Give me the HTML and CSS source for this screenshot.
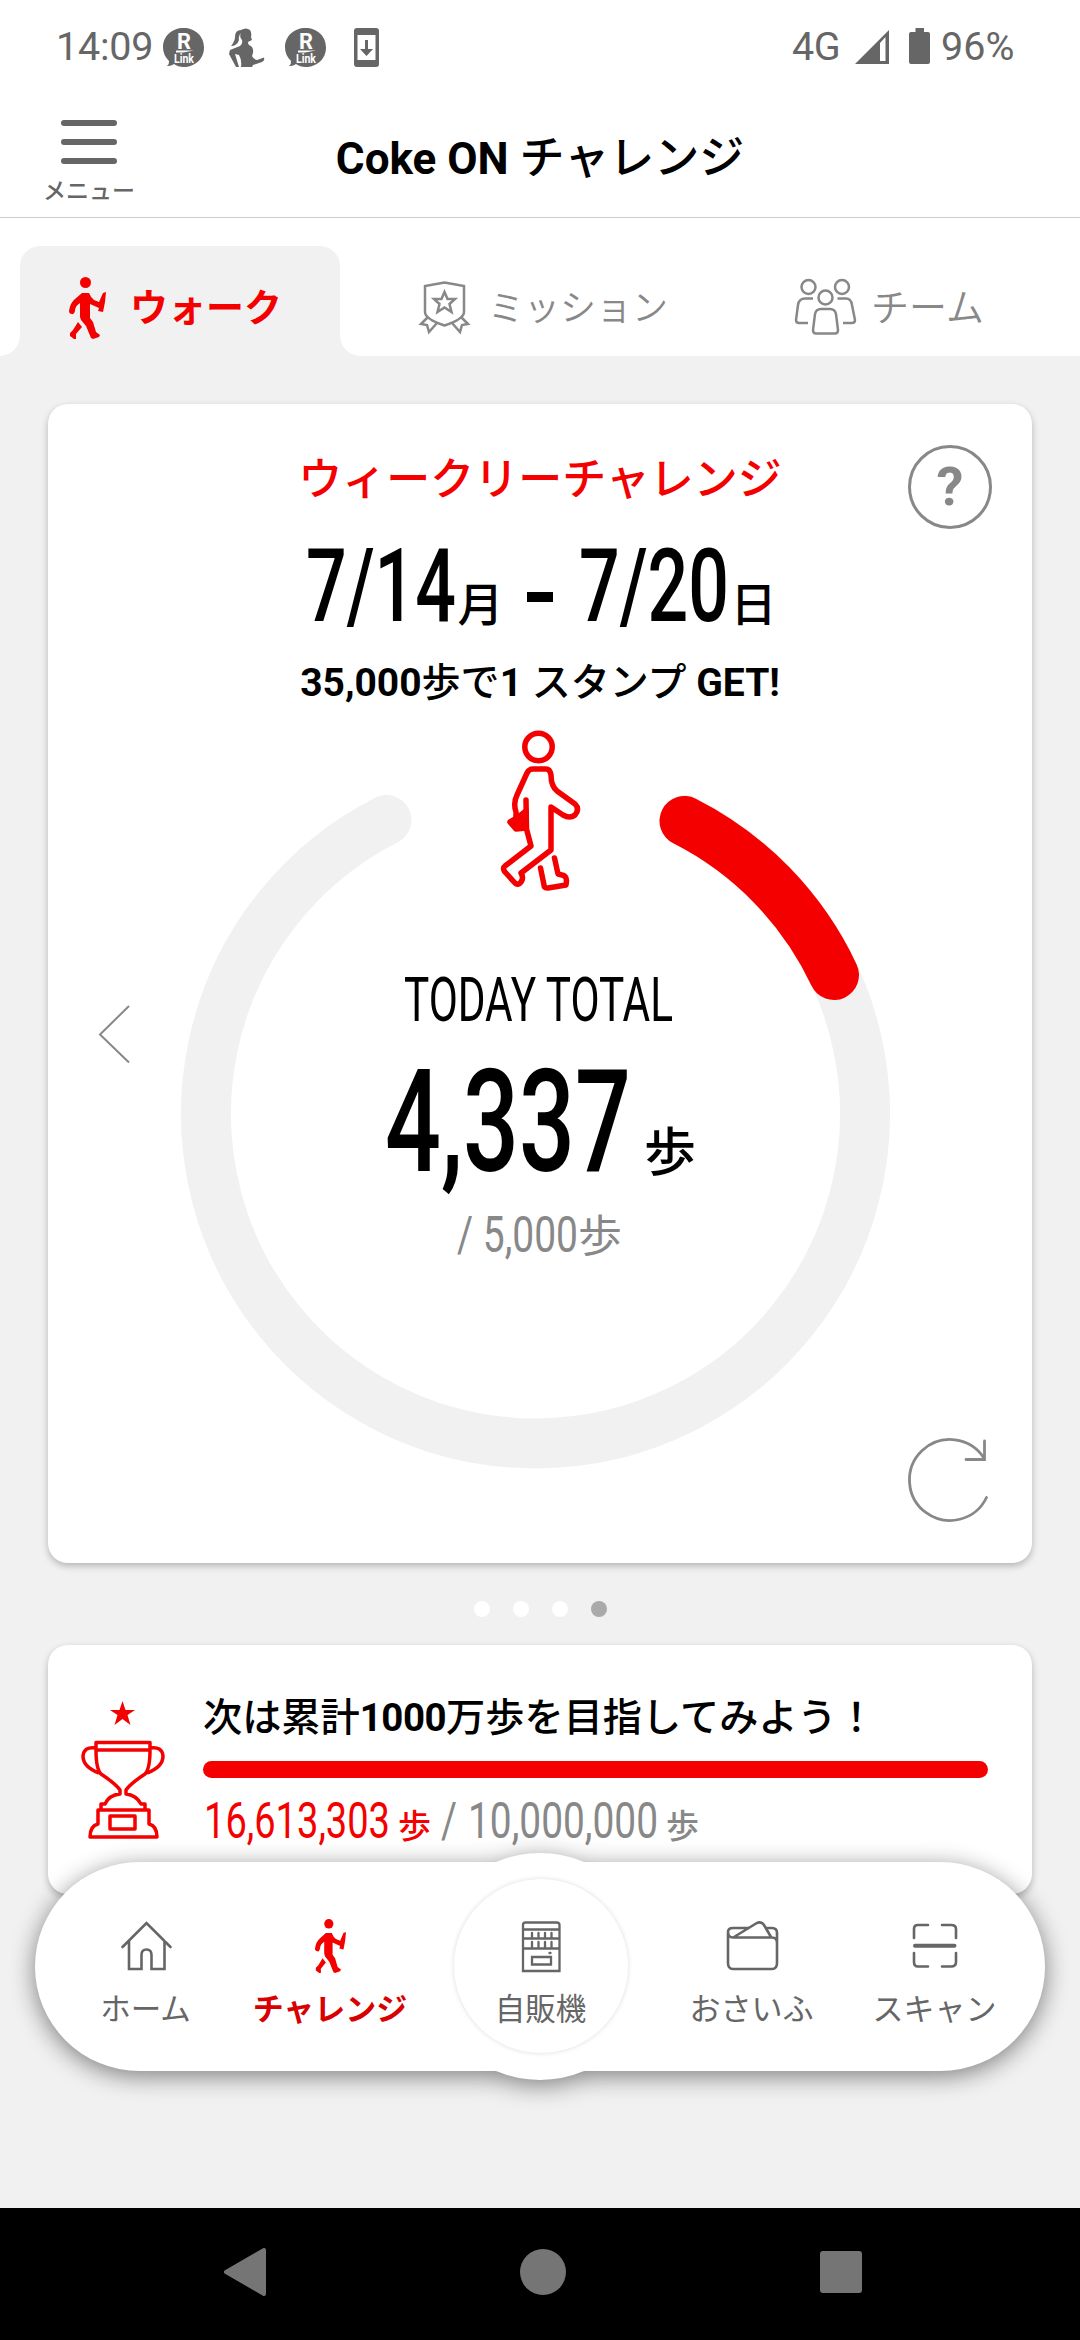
FILE: index.html
```html
<!DOCTYPE html>
<html lang="ja">
<head>
<meta charset="utf-8">
<title>Coke ON チャレンジ</title>
<link rel="stylesheet" href="styles.css">
</head>
<body>
<svg class="defs" aria-hidden="true">
  <symbol id="walker" viewBox="0 0 37 62">
    <circle cx="16.500" cy="5.500" r="5.500"/>
    <path d="M13 16H20Q22 21 25 23L30 25 34 16 37 15 36 25 34 35 29 34 30 31 21 27V41L24 45 27 55 31 58 30 60 24 62 22 61 17 49 12 43 11 40V26Q6 29 6 34 5 38 3 37 0 37 0 34 1 26 6 22Z"/>
    <path d="M9 45L13 50 7 57V62L5 62 1 59 1 56 4 53Z"/>
  </symbol>
  <symbol id="rlink" viewBox="0 0 41 39">
    <path class="fill" d="M20.500 0C32 0 41 8 41 19.500S32 39 20.500 39Q15 39 11 36Q8 38.500 4 38Q6.500 36 6 33Q0 27 0 19.500C0 8 9 0 20.500 0Z"/>
    <path d="M13 22.500H31L20 24.500H13Z" fill="#fff"/>
    <text class="rlink-r" x="14" y="20.500" textLength="14" lengthAdjust="spacingAndGlyphs">R</text>
    <text class="rlink-link" x="11" y="34.500" textLength="20" lengthAdjust="spacingAndGlyphs">Link</text>
  </symbol>
</svg>

<header class="status">
  <span class="time">14:09</span>
  <svg class="st-link" width="41" height="39"><use href="#rlink"/></svg>
  <svg class="st-runner" width="36" height="39" viewBox="0 0 36 39"><path class="fill" d="M12 2Q17-1 21 2 23 5 22 9L23 12 19 14Q19 16 20 17 25 19 24 25L23 28Q24 31 28 32L35 29.500Q36 33 33 34L24 37 23 39H12Q13 32 10 27L6 26 10 39H7L0 26 1 22 11 18Q14 16 13 12 10 9 12 5 9 8 10 12 8 18 2 18 6 13 6 9 6 2 12 2Z"/></svg>
  <svg class="st-link" width="41" height="39"><use href="#rlink"/></svg>
  <svg class="st-phone" width="25" height="39" viewBox="0 0 25 39"><path class="fill" fill-rule="evenodd" d="M3 0H22Q25 0 25 3V36Q25 39 22 39H3Q0 39 0 36V3Q0 0 3 0ZM3.500 7V32H21.500V7ZM11 12H14V21H19L12.500 28 6 21H11Z"/></svg>
  <span class="net">4G</span>
  <svg class="st-signal" width="34" height="34" viewBox="0 0 34 34"><path class="fill" fill-rule="evenodd" d="M34 0V34H0ZM25 13V31H30.500V7Z"/></svg>
  <svg class="st-battery" width="21" height="36" viewBox="0 0 21 36"><path class="fill" d="M6.500 0H15V4H19Q21 4 21 6V34Q21 36 19 36H2Q0 36 0 34V6Q0 4 2 4H6.500Z"/></svg>
  <span class="level">96%</span>
</header>

<div class="appbar">
  <button class="menu"><i></i><i></i><i></i><span>メニュー</span></button>
  <h1>Coke ON <span>チャレンジ</span></h1>
</div>

<nav class="tabs">
  <a class="tab active">
    <svg class="red" width="37" height="62"><use href="#walker"/></svg>
    <span>ウォーク</span>
  </a>
  <a class="tab mission">
    <svg class="line" width="51" height="52" viewBox="0 0 51 52"><path d="M25.500 1.500L45 5V31Q45 38 25.500 44.500 6 38 6 31V5ZM25.500 11L28.500 18H36L30.500 23 32.500 31 25.500 26.500 18.500 31 20.500 23 15 18H22.500ZM9 36L2 43 8 44 10 51 18 42M42 36L49 43 43 44 41 51 33 42"/></svg>
    <span>ミッション</span>
  </a>
  <a class="tab team">
    <svg class="line" width="61" height="56" viewBox="0 0 61 56"><circle cx="13.500" cy="8" r="7"/><circle cx="47" cy="8" r="7"/><circle cx="30.500" cy="18.500" r="7"/><path d="M18 19.500H10Q4 19.500 3 26L1 41Q1 44 4 44H13M42.500 19.500H51Q56 19.500 57 26L60 41Q60 44 57 44H48M26 30H35Q40 30 41 35L43 51Q43 54.500 40 54.500H21Q18 54.500 18 51L20 35Q21 30 26 30Z"/></svg>
    <span>チーム</span>
  </a>
</nav>

<main>
  <section class="card weekly">
    <h2>ウィークリーチャレンジ</h2>
    <div class="range">
      <svg width="150" height="80"><text class="date" x="0" y="76" textLength="150" lengthAdjust="spacingAndGlyphs">7/14</text></svg>
      <span class="day">月</span>
      <i class="dash"></i>
      <svg width="150" height="80"><text class="date" x="0" y="76" textLength="150" lengthAdjust="spacingAndGlyphs">7/20</text></svg>
      <span class="day">日</span>
    </div>
    <p class="reward">35,000<span>歩で</span>1 <span>スタンプ</span> GET!</p>

    <svg class="dial" width="984" height="760" viewBox="48 724 984 760">
      <path class="track" d="M386.500 820A329.500 329.500 0 1 0 684.500 820"/>
      <path class="value" d="M684.500 821A329.500 329.500 0 0 1 834 975"/>
      <g class="figure">
        <circle cx="538.500" cy="747" r="13.700"/>
        <path d="M526 800L526.500 829 531 846 505 866Q502 868 505 872L515 883Q518 886 521 882 524 878 521 873L551 850V807L563 815Q570 819 575 815 580 809 575 804L557 791Q551 786 551 775Q550 769 546 769H533Q529 769 527 773L517 795Q513 803 516 812V820"/>
        <path class="solid" d="M526 811L517 818 510 822 516 829 526 828Z"/>
        <path d="M540.500 868L544 885Q544 888 548 888L566 885Q568 876 562 875L558 874 554.500 858"/>
      </g>
      <path class="chevron" d="M129 1006L100 1034.500 129 1062.500"/>
      <text class="today" x="404" y="1021" textLength="269" lengthAdjust="spacingAndGlyphs">TODAY TOTAL</text>
      <text class="steps" x="385" y="1171" textLength="246" lengthAdjust="spacingAndGlyphs">4,337</text>
      <text class="steps-unit" x="644" y="1171">歩</text>
      <text class="goal" x="457" y="1252" textLength="121" lengthAdjust="spacingAndGlyphs">/ 5,000</text>
      <text class="goal-unit" x="578" y="1252">歩</text>
    </svg>

    <button class="help">?</button>
    <svg class="refresh" width="84" height="86" viewBox="908 1438 84 86"><path d="M986.500 1497.500A40.500 40.500 0 1 1 984 1458M984.500 1441V1459.500H966"/></svg>
  </section>

  <div class="pager"><i></i><i></i><i></i><i class="on"></i></div>

  <section class="card total">
    <svg class="cup" width="84" height="138" viewBox="81 1701 84 138">
      <path class="solid" d="M122.500 1701L125.500 1710H135L127.500 1715 130.500 1725 122.500 1719 114.500 1725 117.500 1715 110 1710H119.500Z"/>
      <path d="M96 1742.500H150V1750H96ZM96 1750Q96 1769 101 1774 116 1784 120 1790V1794Q109 1795 105 1804H101V1810H98V1824Q90 1826 90 1837H157Q157 1826 149 1824V1810H145V1804H141Q136 1795 126 1794V1790Q130 1784 145 1774 150 1769 150 1750M96 1748Q84 1746 83 1756 83 1767 99 1773M150 1748Q162 1746 163 1756 163 1767 147 1773M101 1810H145M110 1816H135V1829H110Z"/>
    </svg>
    <div class="total-body">
      <p class="next">次は累計<b>1000</b>万歩を目指してみよう！</p>
      <div class="bar"></div>
      <svg class="counts" width="520" height="50">
        <text class="count on" x="1" y="46" textLength="186" lengthAdjust="spacingAndGlyphs">16,613,303</text>
        <text class="unit on" x="195" y="46">歩</text>
        <text class="count" x="238" y="46" textLength="16" lengthAdjust="spacingAndGlyphs">/</text>
        <text class="count" x="265" y="46" textLength="190" lengthAdjust="spacingAndGlyphs">10,000,000</text>
        <text class="unit" x="463" y="46">歩</text>
      </svg>
    </div>
  </section>
</main>

<nav class="dock">
  <svg class="dock-shape" width="1080" height="300" viewBox="0 1820 1080 300"><path d="M139.500 1862H496A113 113 0 0 1 584 1862H940.500A104.500 104.500 0 0 1 940.500 2071H584A113 113 0 0 1 496 2071H139.500A104.500 104.500 0 0 1 139.500 1862Z"/></svg>
  <a class="item home"><svg width="50" height="54" viewBox="120 1919 50 54"><path d="M121.500 1947L145.500 1923 169.500 1947M128 1941V1969H140.500V1955Q140.500 1949.500 145.500 1949.500T150.500 1955V1969H163.500V1941"/></svg><span>ホーム</span></a>
  <a class="item on"><svg width="31" height="54" viewBox="0 0 37 62" preserveAspectRatio="none"><use href="#walker" width="37" height="62"/></svg><span>チャレンジ</span></a>
  <a class="item vending"><svg width="40" height="54" viewBox="520 1919 40 54"><path d="M524.500 1922.500H555.500Q558.500 1922.500 558.500 1925V1971H522V1925Q522 1922.500 524.500 1922.500ZM522 1929.500H558.500M522 1938.500H558.500M522 1948.500H558.500M531 1957H550V1964.500H531ZM531 1933V1938M537.500 1933V1938M544 1933V1938M550.500 1933V1938M531 1942V1948M537.500 1942V1948M544 1942V1948M550.500 1942V1948M548.500 1953H549.500"/></svg><span>自販機</span></a>
  <a class="item wallet"><svg width="54" height="54" viewBox="724 1919 54 54"><path d="M727 1933V1963Q727 1969 732 1969H771Q776 1969 776 1963V1943Q776 1937.500 771 1937.500H732Q727 1937.500 727 1932 727 1928 732 1928H747M765 1928H771Q776 1928 776 1933V1943M733 1937L755 1923.500Q760 1920.500 763 1925L770 1937"/></svg><span>おさいふ</span></a>
  <a class="item scan"><svg width="48" height="54" viewBox="911 1919 48 54"><path d="M914 1938V1929Q914 1925 918 1925H928M942 1925H951Q956 1925 956 1929V1938M914 1953V1962Q914 1966.500 918 1966.500H928M942 1966.500H951Q956 1966.500 956 1962V1953"/><path class="beam" d="M915 1945.700H954.500"/></svg><span>スキャン</span></a>
</nav>

<footer class="sysnav">
  <svg width="45" height="50" viewBox="0 0 45 50"><path d="M41 3V47L3 25Z"/></svg>
  <i class="round"></i>
  <i class="square"></i>
</footer>
</body>
</html>
```

FILE: styles.css
```css
* { box-sizing: border-box; }
body {
  margin: 0;
  width: 1080px;
  height: 2340px;
  position: relative;
  overflow: hidden;
  display: flex;
  flex-direction: column;
  background: #f1f1f1;
  font-family: Roboto, "Noto Sans CJK JP", sans-serif;
  color: #000;
}
svg { display: block; flex: none; overflow: visible; }
h1, h2, p { margin: 0; font-weight: 500; white-space: nowrap; }
button { border: 0; background: none; padding: 0; font-family: inherit; }
.defs { position: absolute; width: 0; height: 0; }
.fill { fill: #666; }

/* status bar */
.status {
  height: 94px;
  flex: none;
  display: flex;
  align-items: center;
  padding-left: 56px;
  background: #fff;
  color: #666;
  font-size: 39.500px;
  line-height: 94px;
}
.time { width: 107px; letter-spacing: -.2px; }
.st-link { margin-right: 25px; }
.st-runner { margin-right: 20px; }
.st-phone { margin-left: 3px; }
.net { margin-left: 413px; width: 63px; letter-spacing: -.500px; }
.st-signal { margin-right: 20px; }
.st-battery { margin-right: 11px; margin-bottom: 3px; }
.rlink-r { font: bold 22px Roboto, sans-serif; fill: #fff; }
.rlink-link { font: bold 12px Roboto, sans-serif; fill: #fff; }

/* app bar */
.appbar {
  height: 124px;
  flex: none;
  display: grid;
  grid-template-columns: 178px 724px 178px;
  background: #fff;
  border-bottom: 1px solid #ccc;
}
.menu { display: flex; flex-direction: column; align-items: center; padding-top: 26px; color: #666; }
.menu i { width: 56px; height: 6px; border-radius: 3px; background: #666; margin-bottom: 13px; }
.menu span { font-size: 23px; line-height: 24px; font-weight: 500; position: relative; top: 3px; }
h1 { font-size: 44px; font-weight: 700; line-height: 64px; padding-top: 33px; text-align: center; }
h1 span { font-weight: 500; font-size: 45px; }

/* tabs */
.tabs { height: 138px; flex: none; display: flex; align-items: flex-end; background: #fff; }
.tab { height: 110px; padding-top: 12px; display: flex; align-items: center; color: #888; font-size: 36px; font-weight: 350; white-space: nowrap; }
.active {
  position: relative;
  width: 320px;
  margin-left: 20px;
  padding-left: 49px;
  gap: 24px;
  border-radius: 20px 20px 0 0;
  background: #f1f1f1;
  color: #f50000;
  font-size: 38px;
  font-weight: 700;
}
.active::before, .active::after { content: ""; position: absolute; bottom: 0; width: 20px; height: 20px; }
.active::before { left: -20px; background: radial-gradient(circle at 0 0, #fff 19.500px, #f1f1f1 20px); }
.active::after { right: -20px; background: radial-gradient(circle at 100% 0, #fff 19.500px, #f1f1f1 20px); }
.active svg { margin-top: 2px; }
.active span, .mission span, .team span { margin-top: -5px; }
.mission { margin-left: 79px; gap: 18px; }
.team { margin-left: 127px; gap: 15px; font-size: 38px; }
.line { fill: none; stroke: #888; stroke-width: 2.500; }
.red { fill: #f50000; }

/* cards */
main { padding: 48px 48px 0; flex: 1; }
.card { background: #fff; border-radius: 20px; box-shadow: 0 3px 7px rgba(0, 0, 0, .25); }
.weekly { position: relative; height: 1159px; padding-top: 44px; text-align: center; }
h2 { color: #f50000; font-size: 44px; line-height: 64px; }
.range { display: flex; align-items: flex-end; height: 114px; padding: 0 0 1px 258px; }
.date { font: 500 102px Roboto, sans-serif; }
.day { width: 49px; font-size: 46px; font-weight: 500; line-height: 46px; margin-bottom: -3px; }
.dash { width: 26px; height: 10px; margin: 0 26px 23px 22px; background: #000; }
.reward { font-size: 39px; font-weight: 700; line-height: 56px; margin-top: 29px; }
.reward span { font-weight: 500; }
.dial { margin-top: 13px; }
.track, .value { fill: none; stroke-width: 50; stroke-linecap: round; stroke: #f1f1f1; }
.value { stroke: #f50000; }
.figure { fill: none; stroke: #f50000; stroke-width: 5.500; stroke-linecap: round; stroke-linejoin: round; }
.solid { fill: #f50000; }
.chevron { fill: none; stroke: #888; stroke-width: 2; }
.today { font: 400 62px Roboto, sans-serif; }
.steps { font: 500 142px Roboto, sans-serif; }
.goal { font: 400 50px Roboto, sans-serif; fill: #888; }
.steps-unit { font: 500 52px "Noto Sans CJK JP", sans-serif; }
.goal-unit { font: 400 44px "Noto Sans CJK JP", sans-serif; fill: #888; }
.help {
  position: absolute;
  right: 40px;
  top: 41px;
  width: 84px;
  height: 84px;
  border: 3px solid #888;
  border-radius: 50%;
  color: #888;
  font-size: 54px;
  font-weight: 700;
  line-height: 78px;
}
.refresh { position: absolute; right: 40px; bottom: 39px; fill: none; stroke: #888; stroke-width: 2.800; stroke-linecap: round; }

.pager { display: flex; justify-content: center; gap: 23px; height: 82px; padding-top: 38px; }
.pager i { width: 16px; height: 16px; border-radius: 50%; background: #fff; }
.pager .on { background: #aaa; }

.total { height: 249px; display: flex; padding: 56px 44px 0 33px; }
.cup { fill: none; stroke: #f50000; stroke-width: 3.500; stroke-linejoin: round; }
.cup .solid { fill: #f50000; stroke: none; }
.total-body { width: 785px; margin-left: 38px; }
.next { font-size: 39.200px; line-height: 60px; margin-top: -13px; font-weight: 500; }
.next b { font-size: 38.500px; letter-spacing: -.500px; }
.bar { height: 17px; margin-top: 13px; border-radius: 9px; background: #f50000; }
.counts { margin-top: 14px; }
.count { font: 400 50px Roboto, sans-serif; fill: #888; }
.unit { font: 500 33px "Noto Sans CJK JP", sans-serif; fill: #888; }
.counts .on { fill: #f50000; }

/* floating navigation over the page */
.dock { position: absolute; left: 0; top: 1820px; width: 1080px; height: 300px; }
.dock-shape { position: absolute; inset: 0; fill: #fff; filter: drop-shadow(0 5px 12px rgba(0, 0, 0, .48)); }
.item {
  position: absolute;
  top: 99px;
  width: 180px;
  margin-left: -90px;
  display: flex;
  flex-direction: column;
  align-items: center;
  gap: 15px;
  color: #666;
  font-size: 30.500px;
  line-height: 44px;
  white-space: nowrap;
}
.item svg { fill: none; stroke: #666; stroke-width: 2.600; stroke-linecap: round; }
.item .beam { stroke-width: 4; }
.home { left: 145.500px; }
.item.on { left: 330px; color: #d80000; font-weight: 700; font-size: 31px; }
.item.on svg { fill: #f50000; stroke: none; }
.vending { left: 540.500px; }
.vending svg { stroke-width: 2.300; z-index: 1; }
.vending span { z-index: 1; }
.vending::before {
  content: "";
  position: absolute;
  left: 3px;
  top: -40px;
  width: 174px;
  height: 174px;
  border-radius: 50%;
  background: #fff;
  box-shadow: 0 0 5px rgba(0, 0, 0, .14);
}
.wallet { left: 751.500px; font-size: 31px; }
.scan { left: 934.500px; font-size: 31px; }

/* system navigation */
.sysnav { flex: none; height: 132px; display: flex; align-items: center; background: #000; padding-left: 223px; }
.sysnav svg { margin-bottom: 4px; fill: #757575; stroke: #757575; stroke-width: 4; stroke-linejoin: round; }
.round { width: 46px; height: 46px; margin: 0 0 4px 252px; border-radius: 50%; background: #757575; }
.square { width: 42px; height: 42px; margin: 0 0 4px 254px; border-radius: 3px; background: #757575; }
```
